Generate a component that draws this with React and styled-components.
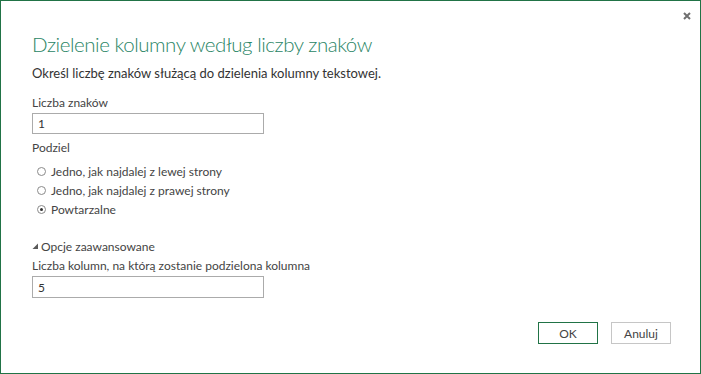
import React from "react";
import styled, { createGlobalStyle } from "styled-components";

const Global = createGlobalStyle`
  html, body { margin: 0; padding: 0; background: #fff; }
  body { font-family: Lato, "Open Sans", sans-serif; }
  * { box-sizing: border-box; }
`;

const Dialog = styled.div`
  position: relative;
  width: 701px;
  height: 374px;
  border: 1px solid #217346;
  background: #fff;
  display: flex;
  flex-direction: column;
  color: #444;
`;

const CloseButton = styled.button`
  position: absolute;
  top: 10px;
  right: 9px;
  width: 9px;
  height: 9px;
  padding: 0;
  border: 0;
  background: none;
  display: flex;
  align-items: center;
  justify-content: center;
`;

const Body = styled.div`
  padding: 29px 31px 0 31px;
  display: flex;
  flex-direction: column;
  flex: 1;
`;

const Title = styled.h1`
  margin: 0;
  font-weight: 300;
  font-size: 20.5px;
  line-height: 28px;
  letter-spacing: -0.45px;
  color: #2a8565;
`;

const Subtitle = styled.p`
  margin: 5.5px 0 0;
  font-size: 13px;
  line-height: 18px;
  color: #333;
`;

const Label = styled.div`
  margin-top: ${p => p.$mt}px;
  font-size: 12px;
  line-height: 16px;
  color: #444;
`;

const Input = styled.input`
  margin-top: ${p => p.$mt}px;
  width: 232px;
  height: ${p => p.$h}px;
  border: 1px solid #ababab;
  padding: 0 5px;
  font-family: inherit;
  font-size: 12px;
  color: #333;
  outline: none;
`;

const RadioList = styled.div`
  margin-top: 6px;
  display: flex;
  flex-direction: column;
`;

const RadioRow = styled.label`
  height: 19px;
  display: flex;
  align-items: center;
  padding-left: 5px;
  gap: 5px;
  font-size: 12px;
  color: #444;
`;

const RadioCircle = styled.span`
  width: 9px;
  height: 9px;
  border-radius: 50%;
  border: 1px solid #8a8a8a;
  display: flex;
  align-items: center;
  justify-content: center;
  &::after {
    content: "";
    width: 3px;
    height: 3px;
    border-radius: 50%;
    background: ${p => (p.$checked ? "#333" : "transparent")};
  }
`;

const Advanced = styled.div`
  margin-top: 19.5px;
  display: flex;
  align-items: center;
  gap: 2px;
  font-size: 12px;
  line-height: 16px;
  color: #444;
`;

const Footer = styled.div`
  display: flex;
  justify-content: flex-end;
  gap: 13px;
  padding: 0 29px 29px 0;
`;

const Button = styled.button`
  width: 60px;
  height: 22px;
  background: #fff;
  border: 1px solid ${p => (p.$primary ? "#217346" : "#c6c6c6")};
  font-family: inherit;
  font-size: 12px;
  color: #444;
  padding: 0;
`;

function Radio({ checked, children }) {
  return (
    <RadioRow>
      <RadioCircle $checked={checked} />
      {children}
    </RadioRow>
  );
}

export default function App() {
  return (
    <>
      <Global />
      <Dialog>
        <CloseButton aria-label="Zamknij">
          <svg width="8" height="8" viewBox="0 0 8 8">
            <path d="M1 1 L7 7 M7 1 L1 7" stroke="#6f6f6f" strokeWidth="2" />
          </svg>
        </CloseButton>
        <Body>
          <Title>Dzielenie kolumny według liczby znaków</Title>
          <Subtitle>Określ liczbę znaków służącą do dzielenia kolumny tekstowej.</Subtitle>
          <Label $mt={13.5}>Liczba znaków</Label>
          <Input $mt={2} $h={21} defaultValue="1" />
          <Label $mt={6}>Podziel</Label>
          <RadioList>
            <Radio>Jedno, jak najdalej z lewej strony</Radio>
            <Radio>Jedno, jak najdalej z prawej strony</Radio>
            <Radio checked>Powtarzalne</Radio>
          </RadioList>
          <Advanced>
            <svg width="7" height="7" viewBox="0 0 7 7">
              <polygon points="6,0.5 6,6 0.5,6" fill="#5a5a5a" />
            </svg>
            Opcje zaawansowane
          </Advanced>
          <Label $mt={3}>Liczba kolumn, na którą zostanie podzielona kolumna</Label>
          <Input $mt={2.5} $h={22} defaultValue="5" />
        </Body>
        <Footer>
          <Button $primary>OK</Button>
          <Button>Anuluj</Button>
        </Footer>
      </Dialog>
    </>
  );
}
